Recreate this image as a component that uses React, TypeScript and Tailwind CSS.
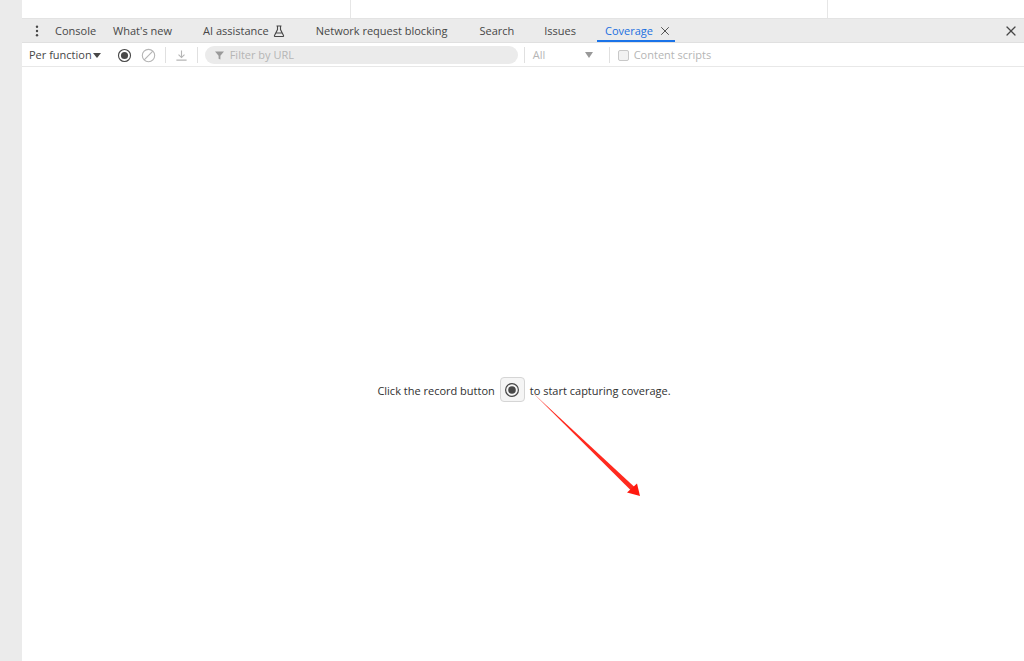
import { X } from "lucide-react";

const TABS = [
  { name: "Console", gap: "ml-[16px]" },
  { name: "What's new", gap: "ml-[17px]" },
  { name: "AI assistance", gap: "ml-[31px]", flask: true },
  { name: "Network request blocking", gap: "ml-[31px]" },
  { name: "Search", gap: "ml-[32px]" },
  { name: "Issues", gap: "ml-[30px]" },
];

function RecordIcon({ className }: { className: string }) {
  return (
    <svg viewBox="0 0 16 16" className={className} fill="none">
      <circle cx="8" cy="8" r="6.4" stroke="#474747" strokeWidth="1.2" />
      <circle cx="8" cy="8" r="3.8" fill="#474747" />
    </svg>
  );
}

function Divider() {
  return <div className="h-[16px] w-px bg-[#e0e0e0]" />;
}

export default function App() {
  return (
    <div className="relative flex h-[661px] w-[1024px] overflow-hidden bg-white font-['Open_Sans','Noto_Sans',sans-serif] text-[11px] text-[#474747]">
      <div className="w-[22px] shrink-0 bg-[#ebebeb]" />

      <div className="flex min-w-0 flex-1 flex-col">
        {/* page behind devtools */}
        <div className="flex h-[19px] shrink-0 border-b border-[#e3e3e3]">
          <div className="w-[329px] border-r border-[#e6e6e6]" />
          <div className="w-[477px] border-r border-[#e6e6e6]" />
        </div>

        {/* tab strip */}
        <div className="flex h-[24px] shrink-0 items-center border-b border-[#e0e0e0] bg-[#ebebeb]">
          <svg viewBox="0 0 4 14" className="ml-[13px] h-[12px] w-[4px] shrink-0" fill="#474747">
            <circle cx="2" cy="2" r="1.4" />
            <circle cx="2" cy="7" r="1.4" />
            <circle cx="2" cy="12" r="1.4" />
          </svg>
          {TABS.map((tab) => (
            <div key={tab.name} className={`flex h-full items-center gap-[4px] pt-[1px] ${tab.gap}`}>
              <span className="whitespace-nowrap">{tab.name}</span>
              {tab.flask && (
                <svg viewBox="0 0 12 12" className="h-[12px] w-[12px]" fill="none" stroke="#474747" strokeWidth="1.1">
                  <path d="M3.500 1h5M4.500 1v3.500L1.500 10.600c-.2.4 0 .9.5.9h8c.5 0 .7-.5.5-.9L7.500 4.500V1M3 8h6" />
                </svg>
              )}
            </div>
          ))}
          <div className="relative ml-[21px] flex h-full w-[78px] items-center pl-[8px] pt-[1px] text-[#1a6fe0]">
            <span>Coverage</span>
            <X className="ml-[5px] h-[14px] w-[14px] text-[#474747]" strokeWidth={1.6} />
            <div className="absolute inset-x-0 bottom-0 h-[2px] bg-[#1a73e8]" />
          </div>
          <X className="ml-auto mr-[5px] h-[16px] w-[16px] text-[#474747]" strokeWidth={1.8} />
        </div>

        {/* coverage toolbar */}
        <div className="flex h-[24px] shrink-0 items-center border-b border-[#e8e8e8] pt-[1px] text-[#b5b5b5]">
          <span className="ml-[7px] whitespace-nowrap text-[#474747]">Per function</span>
          <span className="ml-[1px] h-0 w-0 border-x-[4px] border-t-[5px] border-x-transparent border-t-[#474747]" />
          <RecordIcon className="ml-[16px] h-[15px] w-[15px]" />
          <svg viewBox="0 0 16 16" className="ml-[9px] h-[15px] w-[15px]" fill="none" stroke="#b5b5b5" strokeWidth="1.2">
            <circle cx="8" cy="8" r="6.6" />
            <path d="M3.400 12.600l9.200-9.200" />
          </svg>
          <div className="ml-[9px]">
            <Divider />
          </div>
          <svg viewBox="0 0 14 14" className="ml-[9px] h-[13px] w-[13px]" fill="none" stroke="#b5b5b5" strokeWidth="1.2">
            <path d="M7 1.500v7.500M3.800 6l3.200 3.200L10.200 6M1.500 12h11" />
          </svg>
          <div className="ml-[9px]">
            <Divider />
          </div>
          <div className="ml-[7px] flex h-[18px] w-[313px] items-center rounded-full bg-[#ebebeb] pl-[10px]">
            <svg viewBox="0 0 10 10" className="h-[9px] w-[9px]" fill="#9a9a9a">
              <path d="M0 .5h10L6 5.200V9.500L4 8.500V5.200z" />
            </svg>
            <span className="ml-[6px]">Filter by URL</span>
          </div>
          <div className="ml-[6px]">
            <Divider />
          </div>
          <span className="ml-[8px] w-[52px]">All</span>
          <span className="h-0 w-0 border-x-[4px] border-t-[6px] border-x-transparent border-t-[#999999]" />
          <div className="ml-[16px]">
            <Divider />
          </div>
          <span className="ml-[8px] h-[11px] w-[11px] rounded-[2px] border border-[#c8c8c8] bg-[#f2f2f2]" />
          <span className="ml-[5px] whitespace-nowrap">Content scripts</span>
        </div>

        {/* empty state */}
        <div className="flex flex-1 justify-center pt-[310px]">
          <div className="ml-[2px] flex h-[25px] items-center text-[#303030]">
            <span className="whitespace-nowrap pt-[3px]">Click the record button</span>
            <div className="mx-[5px] flex h-[25px] w-[25px] items-center justify-center rounded-[4px] border border-[#d5d5d5] bg-[#f5f5f5]">
              <RecordIcon className="h-[16px] w-[16px]" />
            </div>
            <span className="whitespace-nowrap pt-[3px]">to start capturing coverage.</span>
          </div>
        </div>
      </div>

      {/* red annotation arrow drawn over the screenshot */}
      <svg className="absolute left-0 top-0 h-[661px] w-[1024px]" viewBox="0 0 1024 661" fill="none">
        <path d="M533 393L635 487.500L631.500 491Z" fill="#ff2a1f" />
        <path d="M640 496L627 492.500L637 483.500Z" fill="#ff1a10" />
      </svg>
    </div>
  );
}
